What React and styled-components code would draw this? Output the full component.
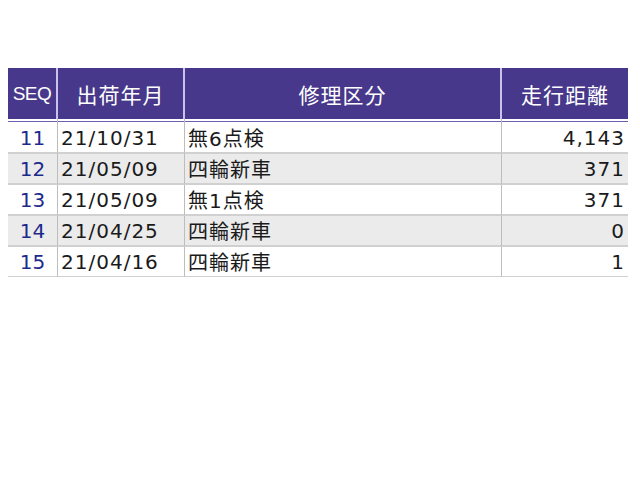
import styled, { createGlobalStyle } from 'styled-components';

const GlobalStyle = createGlobalStyle`
  body {
    margin: 8px;
    background: #ffffff;
    font-family: "DejaVu Sans", "Noto Sans CJK JP", sans-serif;
  }
`;

const Page = styled.div`
  padding-top: 60px;
`;

const Scroller = styled.div`
  width: 620px;
  height: 209px;
  overflow: hidden;
`;

const Table = styled.table`
  width: 620px;
  border-collapse: separate;
  border-spacing: 0;
  table-layout: fixed;
`;

const HeadCell = styled.th`
  height: 51px;
  padding: 0;
  background: #47388b;
  color: #ffffff;
  font-family: ${p => (p.small ? '"Liberation Sans", sans-serif' : '"Noto Sans CJK JP", sans-serif')};
  font-weight: normal;
  font-size: ${p => (p.small ? '19px' : '21px')};
  letter-spacing: ${p => (p.small ? '-0.5px' : '1px')};
  text-align: center;
  border-right: 2px solid #c8c2ec;
  box-shadow: 0 2px 0 #ffffff, 0 3px 0 #6a5fb0;
  &:last-child {
    border-right: none;
  }
`;

const Row = styled.tr`
  background: ${p => (p.shaded ? '#ebebeb' : '#ffffff')};
`;

const Cell = styled.td`
  height: 29px;
  padding: 0 3px;
  font-size: 20px;
  color: ${p => (p.seq ? '#1d2a8c' : '#1a1a1a')};
  text-align: ${p => p.align || 'left'};
  letter-spacing: ${p => (p.seq ? '0' : '1px')};
  border-right: 1px solid #bdbdbd;
  border-bottom: 2px solid #d0d0d0;
  white-space: nowrap;
  &:last-child {
    border-right: none;
  }
`;

const FirstRowSpacer = styled.tr`
  height: 4px;
  td {
    padding: 0;
    border-right: 1px solid #bdbdbd;
  }
  td:last-child {
    border-right: none;
  }
`;

const rows = [
  { seq: 11, date: '21/10/31', kind: '無6点検', km: '4,143' },
  { seq: 12, date: '21/05/09', kind: '四輪新車', km: '371' },
  { seq: 13, date: '21/05/09', kind: '無1点検', km: '371' },
  { seq: 14, date: '21/04/25', kind: '四輪新車', km: '0' },
  { seq: 15, date: '21/04/16', kind: '四輪新車', km: '1' },
];

export default function App() {
  return (
    <>
      <GlobalStyle />
      <Page>
        <Scroller>
          <Table>
            <colgroup>
              <col style={{ width: 50 }} />
              <col style={{ width: 127 }} />
              <col style={{ width: 317 }} />
              <col style={{ width: 126 }} />
            </colgroup>
            <thead>
              <tr>
                <HeadCell small>SEQ</HeadCell>
                <HeadCell>出荷年月</HeadCell>
                <HeadCell>修理区分</HeadCell>
                <HeadCell>走行距離</HeadCell>
              </tr>
            </thead>
            <tbody>
              <FirstRowSpacer>
                <td /><td /><td /><td />
              </FirstRowSpacer>
              {rows.map((r, i) => (
                <Row key={r.seq} shaded={i % 2 === 1}>
                  <Cell seq align="center">{r.seq}</Cell>
                  <Cell>{r.date}</Cell>
                  <Cell>{r.kind}</Cell>
                  <Cell align="right">{r.km}</Cell>
                </Row>
              ))}
            </tbody>
          </Table>
        </Scroller>
      </Page>
    </>
  );
}
